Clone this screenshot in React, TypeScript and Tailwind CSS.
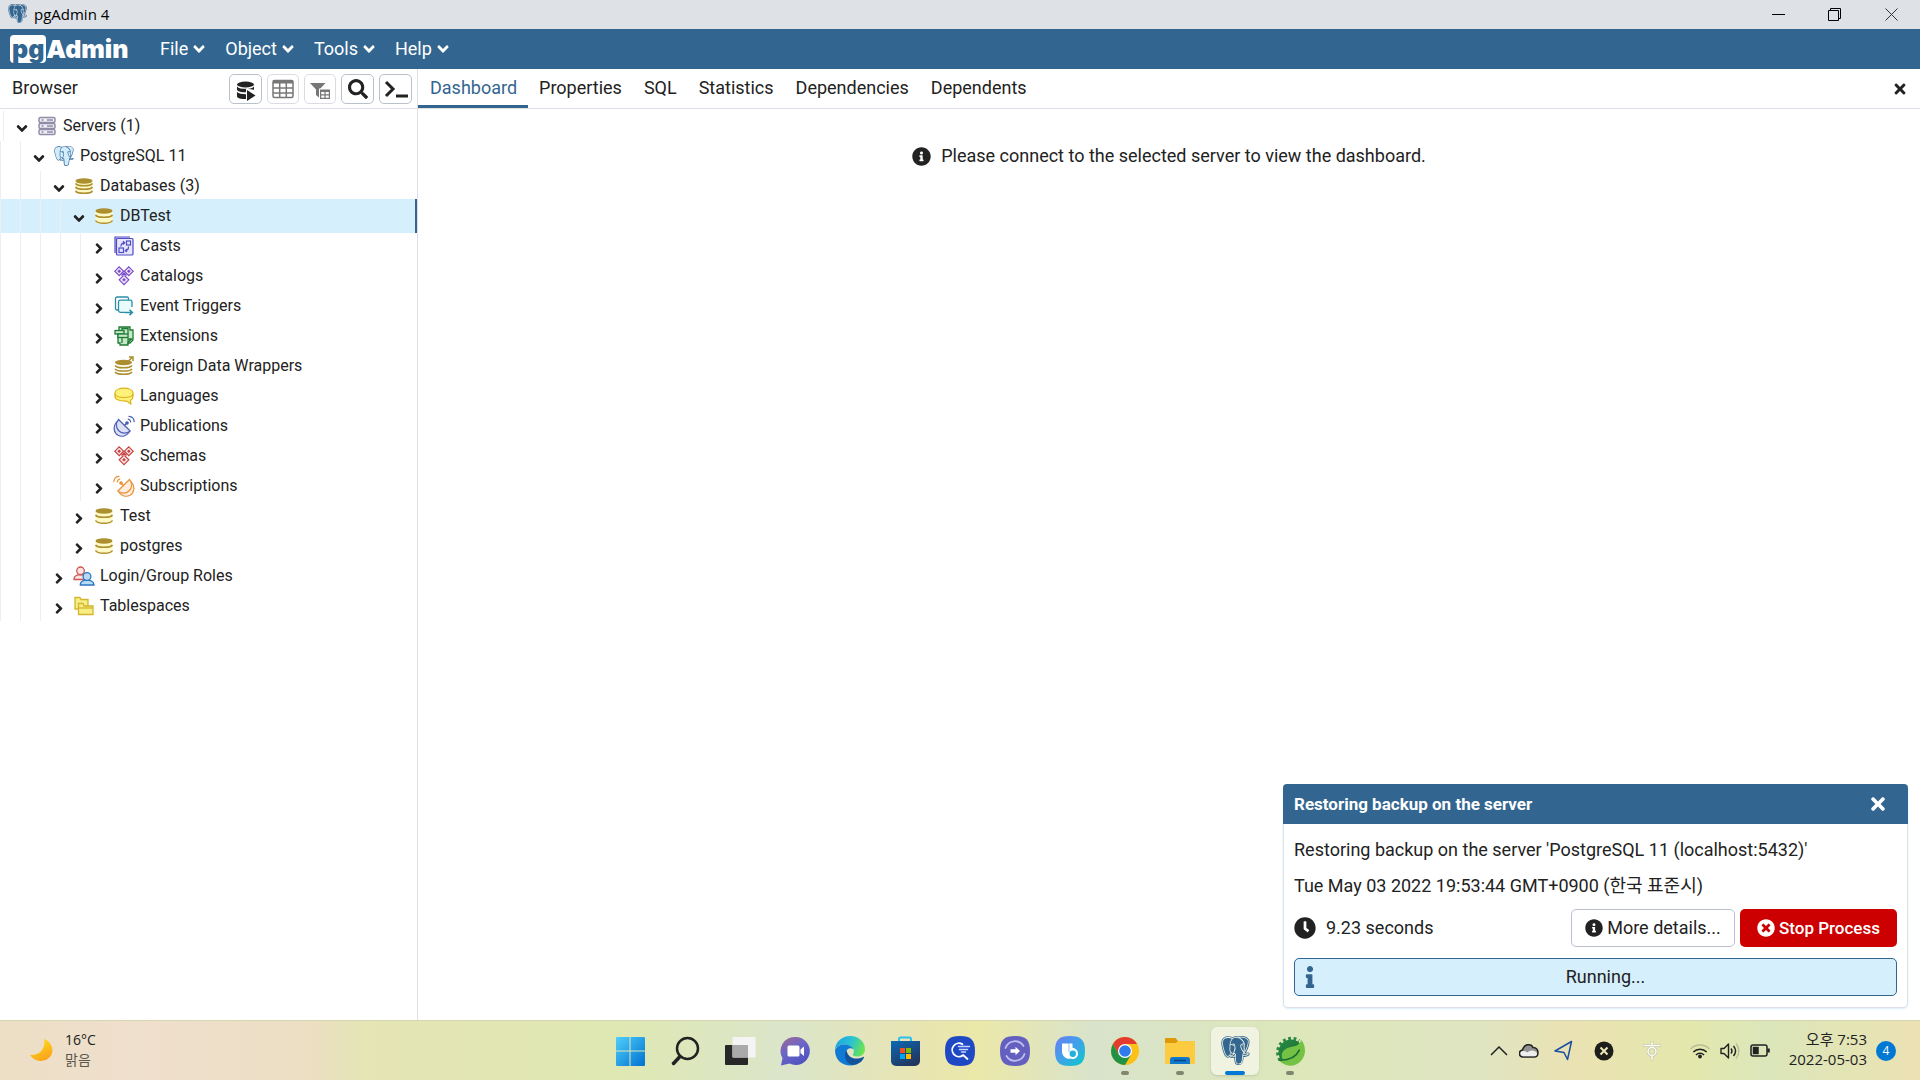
import React from "react";
import { BiLogoPostgresql } from "react-icons/bi";
import { FaAngleDown, FaAngleRight, FaClock, FaInfo, FaInfoCircle, FaSearch, FaTimes, FaTimesCircle } from "react-icons/fa";
import { SiPostgresql } from "react-icons/si";

const Database = ({ layers = 3 }: { layers?: number }) => (
  <svg width="20" height="20" viewBox="0 0 20 20">
    <path d="M1.500 5v10.500c0 1.700 3.800 2.500 8.500 2.500s8.500-.8 8.500-2.500V5z" fill="#fdf8c4" />
    <ellipse cx="10" cy="5" rx="8.500" ry="2.700" fill="#ac8f2f" />
    <g fill="none" stroke="#ac8f2f" strokeWidth="1.500">
      {layers === 3 ? (
        <path d="M1.500 9c1 1.700 4.500 2.300 8.500 2.300s7.500-.6 8.500-2.300M1.500 14.500c1 2 4.500 2.700 8.500 2.700s7.500-.7 8.500-2.700" />
      ) : (
        <path d="M1.500 7.500c1 1.600 4.500 2.200 8.500 2.200s7.500-.6 8.500-2.200M1.500 11c1 1.700 4.500 2.300 8.500 2.300s7.500-.6 8.500-2.300M1.500 15c1 1.700 4.500 2.300 8.500 2.300s7.500-.6 8.500-2.300" />
      )}
    </g>
  </svg>
);

const Servers = () => (
  <svg width="20" height="20" viewBox="0 0 20 20" fill="#f0eff5" stroke="#8f8ca8" strokeWidth="1.500">
    {[1.5, 7.5, 13.5].map((y) => (
      <g key={y}>
        <rect x="2" y={y} width="16" height="5" rx="1.500" />
        <path d={`M4.500 ${y + 2.5}h2M10 ${y + 2.5}h6`} strokeWidth="1.300" />
      </g>
    ))}
  </svg>
);

const Elephant = () => (
  <svg width="20" height="20" viewBox="0 0 24 24">
    <path d="M8 1.500C5 .2 1.500 1.300 1.300 5.500c0 3.500 2 10.500 4 11 1.200.2 2.200-1 3.700-3l3 2v4c.2 3.500 2.500 4.500 4.700 3.500 1.500-1 1.500-4 1.800-7 2 .3 4 .2 4.500-1.200l-3-.5c2-3 3.500-7.500 3-9.500C21.500 1.300 17.500.5 15 1.600 12.500.8 10.500.8 8 1.500z" fill="#d2ecfa" />
    <SiPostgresql size={24} color="#2f6a9a" />
  </svg>
);

const Casts = () => (
  <svg width="20" height="20" viewBox="0 0 20 20" fill="none" stroke="#4f4cc4" strokeWidth="1.200">
    <path d="M1 17V1h15" fill="#e2e0fa" />
    <rect x="2.500" y="2.500" width="16.500" height="16.500" rx="1" fill="#e7e6fc" />
    <rect x="5" y="12" width="4.500" height="4.500" />
    <rect x="12.500" y="5" width="4" height="4" />
    <path d="M6.800 10.500C7 8 8 6.800 10.500 6.800M9 5.200l1.700 1.600L9 8.500M14.500 10.500c0 3-1 4-3 4M13 13l-1.700 1.600L13 16" />
  </svg>
);

const Diamonds = ({ red = false }: { red?: boolean }) => (
  <svg width="20" height="20" viewBox="0 0 20 20" fill={red ? "#fbe9e9" : "#efe5fa"} stroke={red ? "#c8403f" : "#7a4cc8"} strokeWidth="1.200">
    <path d="M5.200 .8L9.600 5.200 5.200 9.600 .8 5.200zM14.800 .8l4.400 4.400-4.400 4.400-4.400-4.400zM10 9l4.800 4.800L10 18.600l-4.800-4.800z" />
    <path d="M5.200 3.700v3M3.700 5.200h3M14.800 3.700v3M13.300 5.200h3M10 12.300v3M8.500 13.800h3M7.500 9.500L10 7l2.500 2.500" strokeWidth="1.500" />
  </svg>
);

const EventTriggers = () => (
  <svg width="20" height="20" viewBox="0 0 20 20" fill="none" stroke="#2a8fa6" strokeWidth="1.300">
    <path d="M4.500 14H3a1.500 1.500 0 0 1-1.500-1.500v-10A1.500 1.500 0 0 1 3 1h10a1.500 1.500 0 0 1 1.500 1.500V4" />
    <path d="M18 11V6a1.800 1.800 0 0 0-1.800-1.800H6.300A1.800 1.800 0 0 0 4.500 6v8.500a1.800 1.800 0 0 0 1.800 1.800H11" fill="#e9fbfd" />
    <path d="M11 16.500h7M15.500 13.800l2.800 2.700-2.800 2.700" strokeWidth="1.600" />
  </svg>
);

const Extensions = () => (
  <svg width="20" height="20" viewBox="0 0 20 20" fill="#c5e8cb" stroke="#1f7a33" strokeWidth="1.300">
    <path d="M5 1h11v3h3v10l-3 3h-2v2H6v-2H4V8h1z" />
    <rect x="1" y="4.500" width="9" height="3.500" />
    <rect x="4" y="8" width="10" height="3.500" />
    <path d="M8 4V2.500h6V8M8 11.500v5.500M14 18v-5h4.500M14 16.500l3.500-3.500" fill="none" />
  </svg>
);

const Foreign = () => (
  <svg width="20" height="20" viewBox="0 0 20 20" fill="none" stroke="#ac8f2f" strokeWidth="1.500">
    <ellipse cx="9.500" cy="6.500" rx="8.500" ry="2.700" fill="#ac8f2f" stroke="none" />
    <path d="M1 9.500c1 1.600 4.500 2.200 8.500 2.200S17 11.100 18 9.500M1 12.800c1 1.600 4.500 2.200 8.500 2.200s7.500-.6 8.500-2.200M1 16c1 1.600 4.500 2.200 8.500 2.200s7.500-.6 8.500-2.200" />
    <path d="M14 5.500l4-4M15 1h4v4" />
  </svg>
);

const Languages = () => (
  <svg width="20" height="20" viewBox="0 0 20 20" fill="#fff27a" stroke="#d9b419" strokeWidth="1.200">
    <path d="M1 7c0-3 4-4.800 9-4.800S19 4 19 7v3.500c0 2-.8 3-2.500 3.800l.3 3.700-4-3C5.500 15.300 1 13.500 1 10.500z" />
    <path d="M1 8c.5 2.500 4.500 3.500 9 3.500s8.500-1 9-3.500" fill="none" />
  </svg>
);

const Dish = ({ orange = false }: { orange?: boolean }) => (
  <svg width="22" height="22" viewBox="0 0 22 22" stroke={orange ? "#e8913a" : "#4f5fb5"} fill={orange ? "#fdeedd" : "#dde1f5"} strokeWidth="1.200" strokeLinecap="round">
    <g transform={orange ? "translate(22 0) scale(-1 1)" : undefined}>
      <path d="M3.500 7C-.5 12 1 18 5 20.300c4 2 8.500.7 11-2.800z" />
      <path d="M5.500 4.500C2.500 8 2.800 13 6 16s8 2.700 11.200 0z" />
      <path d="M11.500 10.500L14 8" />
      <circle cx="14" cy="8" r="1.200" fill={orange ? "#e8913a" : "#4f5fb5"} />
      <path d="M15.200 4.200c1.400.2 2.300 1.200 2.500 2.600M16 1.300c3 .2 5 2.400 5.200 5.300" fill="none" />
    </g>
  </svg>
);

const Roles = () => (
  <svg width="22" height="20" viewBox="0 0 22 20" strokeWidth="1.300">
    <g fill="#fbe4e4" stroke="#d05555">
      <path d="M1 13.500c0-3 2-4.300 4.200-4.700h4.600c2 .4 3.700 1.700 4 4.700z" />
      <circle cx="7.500" cy="4.800" r="3.800" />
    </g>
    <g fill="#b5dcf5" stroke="#2f74c0">
      <path d="M7.300 19c0-3 2-4.300 4.200-4.700h5c2.200.4 4.200 1.700 4.500 4.700z" />
      <circle cx="14" cy="10.500" r="3.900" />
    </g>
  </svg>
);

const Folders = () => (
  <svg width="20" height="20" viewBox="0 0 20 20" fill="#f7ee84" stroke="#d3b52e" strokeWidth="1.300">
    <path d="M1 13V1.500h5l1 2h7V13z" />
    <path d="M4.500 18.500v-11H9l1 2.500h9v8.500z" />
    <path d="M4.500 12H19" />
  </svg>
);

type Node = { label: string; depth: number; open?: boolean; icon: React.ReactNode; selected?: boolean };

const nodes: Node[] = [
  { label: "Servers (1)", depth: 0, open: true, icon: <Servers /> },
  { label: "PostgreSQL 11", depth: 1, open: true, icon: <Elephant /> },
  { label: "Databases (3)", depth: 2, open: true, icon: <Database layers={4} /> },
  { label: "DBTest", depth: 3, open: true, icon: <Database />, selected: true },
  { label: "Casts", depth: 4, icon: <Casts /> },
  { label: "Catalogs", depth: 4, icon: <Diamonds /> },
  { label: "Event Triggers", depth: 4, icon: <EventTriggers /> },
  { label: "Extensions", depth: 4, icon: <Extensions /> },
  { label: "Foreign Data Wrappers", depth: 4, icon: <Foreign /> },
  { label: "Languages", depth: 4, icon: <Languages /> },
  { label: "Publications", depth: 4, icon: <Dish /> },
  { label: "Schemas", depth: 4, icon: <Diamonds red /> },
  { label: "Subscriptions", depth: 4, icon: <Dish orange /> },
  { label: "Test", depth: 3, icon: <Database /> },
  { label: "postgres", depth: 3, icon: <Database /> },
  { label: "Login/Group Roles", depth: 2, icon: <Roles /> },
  { label: "Tablespaces", depth: 2, icon: <Folders /> },
];

function TreeRow({ node }: { node: Node }) {
  return (
    <li
      role="treeitem"
      aria-level={node.depth + 1}
      aria-expanded={!!node.open}
      aria-selected={!!node.selected}
      className={node.selected ? "-my-0.5 border-r-2 border-[#326690] bg-[#d6effc] py-0.5" : node.depth === 0 ? "pl-[3px]" : ""}
    >
      <div className="flex h-[30px]">
        {Array.from({ length: node.depth }, (_, i) => (
          <span key={i} className="w-5 shrink-0 border-l border-[#ebeef3]" />
        ))}
        <div className="flex items-center border-l border-[#ebeef3] pl-[11px]">
          <button aria-label={`Toggle ${node.label}`} className="mt-1 flex w-3.5 justify-center text-[#222]">
            {node.open ? <FaAngleDown size={17} /> : <FaAngleRight size={17} />}
          </button>
          <span className="ml-2 flex w-5 shrink-0 justify-center *:shrink-0">{node.icon}</span>
          <span className="ml-1.5 whitespace-nowrap text-base text-[#222]">{node.label}</span>
        </div>
      </div>
    </li>
  );
}

const tools: { label: string; dim?: boolean; icon: React.ReactNode }[] = [
  {
    label: "Query Tool",
    icon: (
      <svg className="mt-1" width="20" height="20" viewBox="0 0 20 20" fill="#222">
        <ellipse cx="9.500" cy="3.500" rx="8.500" ry="3" />
        <path d="M1 5.500c1.500 2 5 2.300 8.500 2.300s7-.3 8.500-2.300v3.300l-8-1.300v3.800C6 11.300 1 10.500 1 8.500zM1 11c1.500 1.800 5 2.200 9 2.200V18c-5 0-9-.6-9-2.800z" />
        <path d="M11 9l8.500 5.500L11 20z" />
      </svg>
    ),
  },
  {
    label: "View Data",
    dim: true,
    icon: (
      <svg width="22" height="20" viewBox="0 0 22 20" fill="none" stroke="#777" strokeWidth="1.500">
        <rect x="1" y="1.500" width="20" height="17" rx="1.500" />
        <path d="M1 3h20" strokeWidth="3" />
        <path d="M1 9h20M1 14h20M7.700 3v15M14.300 3v15" />
      </svg>
    ),
  },
  {
    label: "Filtered Rows",
    dim: true,
    icon: (
      <svg className="mt-1" width="20" height="18" viewBox="0 0 20 18" fill="#777">
        <path d="M0 1h15.500L9.500 7.500V16L6 13V7.500z" />
        <path d="M9 6.500h11V17H9z" fill="#fff" />
        <path d="M10 7.500h10V17H10z" />
        <path d="M11.200 10h3.200v2.200h-3.200zM15.600 10h3.200v2.200h-3.200zM11.200 13.500h3.200v2.200h-3.200zM15.600 13.500h3.200v2.200h-3.200z" fill="#fff" />
      </svg>
    ),
  },
  { label: "Search Objects", icon: <FaSearch size={20} /> },
  {
    label: "PSQL Tool",
    icon: (
      <svg width="24" height="20" viewBox="0 0 24 20" fill="none" stroke="#222" strokeWidth="3">
        <path d="M2 3l7 7-7 7M12 17h12" />
      </svg>
    ),
  },
];

const menus = ["File", "Object", "Tools", "Help"];
const tabs = ["Dashboard", "Properties", "SQL", "Statistics", "Dependencies", "Dependents"];

const Squircle = ({ fill, children }: { fill: string; children: React.ReactNode }) => (
  <svg width="30" height="30" viewBox="0 0 30 30">
    <defs>
      <linearGradient id="bix" x1="0" y1="0" x2="1" y2="1">
        <stop offset="0" stopColor="#6c7cf5" />
        <stop offset=".5" stopColor="#3fa3e8" />
        <stop offset="1" stopColor="#0ac8c8" />
      </linearGradient>
    </defs>
    <path d="M15 0c11 0 15 4 15 15s-4 15-15 15S0 26 0 15 4 0 15 0z" fill={fill} />
    {children}
  </svg>
);

const apps: { label: string; state?: "running" | "active"; icon: React.ReactNode }[] = [
  {
    label: "Start",
    icon: (
      <svg width="30" height="30" viewBox="0 0 30 30">
        <defs>
          <linearGradient id="win" x1="0" y1="0" x2="1" y2="1">
            <stop offset="0" stopColor="#4fd0fb" />
            <stop offset="1" stopColor="#0070d0" />
          </linearGradient>
        </defs>
        <path d="M2 1h12.500v13.500H1V2a1 1 0 0 1 1-1zM15.500 1H29a1 1 0 0 1 1 1v12.500H15.500zM1 15.500h13.500V30H2a1 1 0 0 1-1-1zM15.500 15.500H30V29a1 1 0 0 1-1 1H15.500z" fill="url(#win)" />
      </svg>
    ),
  },
  {
    label: "Search",
    icon: (
      <svg width="30" height="30" viewBox="0 0 30 30" fill="none" stroke="#222" strokeLinecap="round">
        <circle cx="17.500" cy="12.500" r="10.500" strokeWidth="2.500" />
        <path d="M10 20.500L3.500 27.500" strokeWidth="3.500" />
      </svg>
    ),
  },
  {
    label: "Task View",
    icon: (
      <svg width="32" height="30" viewBox="0 0 32 30">
        <rect x="1" y="9" width="23" height="20" rx="1" fill="#272727" />
        <rect x="8.500" y="1" width="23" height="20.500" rx="1" fill="#f4f4f4" />
        <path d="M8.500 9H24v12.500H8.500z" fill="#a9aaa9" />
      </svg>
    ),
  },
  {
    label: "Chat",
    icon: (
      <svg width="30" height="30" viewBox="0 0 30 30">
        <defs>
          <linearGradient id="chat" x1="0" y1="0" x2=".6" y2="1">
            <stop offset="0" stopColor="#a0688f" />
            <stop offset=".5" stopColor="#6b66c8" />
            <stop offset="1" stopColor="#4f52c0" />
          </linearGradient>
        </defs>
        <path d="M15.500 1a14 14 0 1 1-6 26.500L1 29.500l1.500-7.500A14 14 0 0 1 15.500 1z" fill="url(#chat)" />
        <rect x="7.500" y="9.500" width="12" height="11" rx="1.500" fill="#fff" />
        <path d="M20.500 13.500L24 10.500v9.500l-3.500-3z" fill="#fff" />
      </svg>
    ),
  },
  {
    label: "Edge",
    icon: (
      <svg width="30" height="30" viewBox="0 0 30 30">
        <defs>
          <linearGradient id="edgeTop" x1="0" y1=".3" x2="1" y2=".6">
            <stop offset="0" stopColor="#1fa4e0" />
            <stop offset=".5" stopColor="#2bc3d2" />
            <stop offset="1" stopColor="#6ee648" />
          </linearGradient>
        </defs>
        <path d="M0 13C1 5.500 7 0 15 0c9 0 15 6 15 13 0 5-3.500 7.500-7.500 7.500-3 0-5-1-4.700-2.300 1-1.200 1.200-2.200 1-3.500C18.300 11 14 8.500 9.500 8.500 5.500 8.500 2 10.500 0 13z" fill="url(#edgeTop)" />
        <path d="M0 14C1.500 10.500 5.500 8.500 9.500 8.500c4 0 7.700 1.800 9 4.800-2.300-2-6.800-1.700-7.300 3C10.700 22.500 16 28.500 21 28.500 12 32 0 27 0 14z" fill="#0f7bd5" />
        <path d="M11.500 14.500C8 18 10.500 30 20 28.800c4-.8 7.500-3.800 9-7.300.2-.7-.3-.8-.9-.5C21 24 13.500 23 11.500 14.500z" fill="#12539c" />
      </svg>
    ),
  },
  {
    label: "Microsoft Store",
    icon: (
      <svg width="30" height="30" viewBox="0 0 30 30">
        <defs>
          <linearGradient id="store" x1="0" y1="0" x2=".6" y2="1">
            <stop offset="0" stopColor="#0a6ab5" />
            <stop offset="1" stopColor="#22365f" />
          </linearGradient>
        </defs>
        <path d="M9 6V3a1.500 1.500 0 0 1 1.500-1.500h9A1.500 1.500 0 0 1 21 3v3" fill="none" stroke="#2cc0ee" strokeWidth="2" />
        <path d="M1 5h29v20a5 5 0 0 1-5 5H6a5 5 0 0 1-5-5z" fill="url(#store)" />
        <path d="M10 12h5v5h-5z" fill="#f25022" />
        <path d="M16 12h5v5h-5z" fill="#7fba00" />
        <path d="M10 18h5v5h-5z" fill="#00a4ef" />
        <path d="M16 18h5v5h-5z" fill="#ffb900" />
      </svg>
    ),
  },
  {
    label: "Quick Search",
    icon: (
      <Squircle fill="#1f48c4">
        <g fill="none" stroke="#fff" strokeLinecap="round" strokeWidth="1.800">
          <path d="M17.500 8.300a6.700 6.700 0 1 0 .5 11M18 19l4.500 4" />
          <path d="M13.500 10.500h11M14.500 13.500h8M16.500 16h4" strokeWidth="1.500" stroke="#c8d6ff" />
        </g>
      </Squircle>
    ),
  },
  {
    label: "Data Transfer",
    icon: (
      <Squircle fill="#6460c0">
        <g fill="none" stroke="#c0bdf0" strokeWidth="1.800" strokeLinecap="round">
          <path d="M5.500 12a10 10 0 0 1 18-2M24.500 18a10 10 0 0 1-18 2" />
        </g>
        <path d="M10.500 13.300h5v-2.500l4.500 4.200-4.500 4.200v-2.500h-5z" fill="#fff" />
      </Squircle>
    ),
  },
  {
    label: "Assistant",
    icon: (
      <Squircle fill="url(#bix)">
        <path d="M7 7.500h5.500a2 2 0 0 1 2 2V23C10 22.500 7 19.500 7 15.500z" fill="#fff" />
        <path d="M14 7.500h3.500v4.200c3.300.4 5.500 3 5.500 5.800 0 3.300-2.500 5.500-5.500 5.500-4 0-5.500-3-5.500-6z" fill="#fff" />
        <path d="M14 8v8" stroke="#8fc4ee" strokeWidth="1" />
        <circle cx="17.800" cy="17.800" r="3.200" fill="#22b0dc" />
      </Squircle>
    ),
  },
  {
    label: "Chrome",
    state: "running",
    icon: (
      <svg width="28" height="28" viewBox="0 0 28 28">
        <circle cx="14" cy="14" r="14" fill="#fbc116" />
        <path d="M14 0a14 14 0 0 1 12.100 7H14L7.900 17.500 1.900 7A14 14 0 0 1 14 0z" fill="#e33b2e" />
        <path d="M1.900 7A14 14 0 0 0 14 28l6.100-10.500L14 20.500l-6.100-3z" fill="#1f9246" />
        <circle cx="14" cy="14" r="7" fill="#fff" />
        <circle cx="14" cy="14" r="5.800" fill="#2f7bec" />
      </svg>
    ),
  },
  {
    label: "File Explorer",
    state: "running",
    icon: (
      <svg width="30" height="30" viewBox="0 0 30 30">
        <path d="M0 3a1 1 0 0 1 1-1h9.500l2.500 3H29a1 1 0 0 1 1 1v4H0z" fill="#dd9a08" />
        <path d="M0 7h11l2-2h16a1 1 0 0 1 1 1v21a1 1 0 0 1-1 1H1a1 1 0 0 1-1-1z" fill="#fdcb40" />
        <path d="M7.500 21h15a2.500 2.500 0 0 1 2.500 2.500V28H5v-4.500A2.500 2.500 0 0 1 7.500 21z" fill="#0f78cc" />
        <path d="M9 24.500h12" stroke="#08447f" strokeWidth="1.500" />
      </svg>
    ),
  },
  { label: "pgAdmin 4", state: "active", icon: <BiLogoPostgresql size={35} color="#336791" /> },
  {
    label: "Spring Tools",
    state: "running",
    icon: (
      <svg width="30" height="30" viewBox="0 0 30 30">
        <defs>
          <linearGradient id="leaf" x1="0" y1="0" x2=".8" y2=".9">
            <stop offset="0" stopColor="#2a8a45" />
            <stop offset=".55" stopColor="#1f7a3a" />
            <stop offset=".8" stopColor="#6cbe45" />
          </linearGradient>
        </defs>
        <path d="M5.500 24A13.500 13.500 0 0 1 24 5" fill="none" stroke="#2a8a45" strokeWidth="4" strokeDasharray="2.700 2.500" />
        <circle cx="16" cy="16" r="12.500" fill="url(#leaf)" />
        <path d="M26.500 4C31 10 31.500 19 26 25c-5 5.500-13 6-18.500 2.300C5.500 26 4.500 25 4 24c8 .5 17-2 20.500-9z" fill="#74c244" />
        <path d="M26.500 3.500c-1.500 5.500-5.500 6.500-10.500 7.500-6 1.300-9.500 4.500-9.300 9 .1 1.800.8 3 1.500 3.700C20 22.500 27.500 18 26.500 3.500z" fill="#74c244" />
        <path d="M4.500 24.200c9 .3 16.500-3 19.800-10" fill="none" stroke="#176c31" strokeWidth="1.600" strokeLinecap="round" />
      </svg>
    ),
  },
];

export default function App() {
  return (
    <div className="relative flex h-screen flex-col overflow-hidden bg-white font-[Roboto,'Noto_Sans_CJK_KR',sans-serif] text-[#222]">
      <header className="flex h-[29px] shrink-0 items-center bg-[#dee1e6] pl-1.5 font-['Open_Sans','Noto_Sans_CJK_KR',sans-serif] text-black">
        <BiLogoPostgresql className="-mt-0.5" size={23} color="#336791" />
        <span className="ml-[5px] text-[15px]">pgAdmin 4</span>
        <div className="ml-auto flex h-full">
          <button aria-label="Minimize" className="flex w-14 items-center justify-center">
            <svg width="13" height="13" viewBox="0 0 13 13" stroke="#000"><path d="M0 6.500h13" /></svg>
          </button>
          <button aria-label="Restore" className="flex w-14 items-center justify-center">
            <svg width="13" height="13" viewBox="0 0 13 13" fill="none" stroke="#000"><path d="M.5 2.500h10v10H.5zM2.500 2V.5h10v10H11" /></svg>
          </button>
          <button aria-label="Close" className="flex w-[58px] items-center justify-center">
            <svg width="13" height="13" viewBox="0 0 13 13" stroke="#333"><path d="M.5.500l12 12M12.500.500l-12 12" /></svg>
          </button>
        </div>
      </header>

      <div className="flex h-10 shrink-0 items-center bg-[#326690] text-white">
        <div className="ml-2.5 flex w-[136px] items-center font-[Inter,sans-serif] text-[25px] leading-7 font-black">
          <span className="h-7 rounded-sm bg-white px-0.5 text-[#326690]">pg</span>
          <span>Admin</span>
        </div>
        <nav className="flex gap-[17px] pl-3.5">
          {menus.map((m) => (
            <button key={m} className="flex items-center gap-0.5 text-lg">
              {m}
              <FaAngleDown size={18} />
            </button>
          ))}
        </nav>
      </div>

      <div className="flex min-h-0 flex-1">
        <aside className="flex w-[418px] shrink-0 flex-col border-r border-[#dde0e6]">
          <div className="flex h-10 shrink-0 items-center border-b border-[#dde0e6] pr-[5px] pl-3">
            <h2 className="flex-1 pb-0.5 text-lg">Browser</h2>
            <div className="flex gap-[5px]">
              {tools.map((t) => (
                <button key={t.label} aria-label={t.label} className={t.dim ? "flex h-[30px] w-8 items-center justify-center rounded-[5px] border border-[#d9dce3]" : "flex h-[30px] w-[33px] items-center justify-center rounded-[5px] border border-[#bac1cd]"}>
                  {t.icon}
                </button>
              ))}
            </div>
          </div>
          <ul role="tree" aria-label="Browser" className="pt-0.5">
            {nodes.map((n) => <TreeRow key={n.label} node={n} />)}
          </ul>
        </aside>

        <main className="flex min-w-0 flex-1 flex-col">
          <div className="flex h-10 shrink-0 border-b border-[#dde0e6]">
            <div role="tablist" className="flex">
              {tabs.map((t, i) => (
                <button key={t} role="tab" aria-selected={i === 0} className={i === 0 ? "border-b-3 border-[#326690] px-3 pt-px pr-[11px] text-lg text-[#326690]" : "border-b-3 border-transparent px-[11px] pt-px text-lg"}>
                  {t}
                </button>
              ))}
            </div>
            <button aria-label="Close tab" className="mr-3 ml-auto"><FaTimes size={16} /></button>
          </div>
          <p className="mt-[33px] flex items-center justify-center gap-2.5 text-lg">
            <FaInfoCircle size={19} />
            Please connect to the selected server to view the dashboard.
          </p>
        </main>
      </div>

      <section aria-label="Background process" className="absolute right-3 bottom-[72px] w-[625px] rounded-[5px] border border-t-0 border-[#dde0e6] bg-white text-lg shadow-[0_1px_2px_#d6effc]">
        <div className="-mx-px flex h-10 items-center rounded-t-[4px] bg-[#326690] pr-5 pl-[11px] text-[17px] font-bold text-white">
          Restoring backup on the server
          <button aria-label="Close" className="ml-auto"><FaTimes size={20} /></button>
        </div>
        <div className="px-2.5 pt-2 pb-[11px] leading-9">
          <p>Restoring backup on the server 'PostgreSQL 11 (localhost:5432)'</p>
          <p>Tue May 03 2022 19:53:44 GMT+0900 (한국 표준시)</p>
          <div className="mt-[5px] flex items-center">
            <FaClock size={22} />
            <span className="ml-2.5">9.23 seconds</span>
            <button className="ml-auto flex h-[38px] w-[164px] items-center justify-center gap-1 rounded-[5px] border border-[#bac1cd]">
              <FaInfoCircle size={18} />More details...
            </button>
            <button className="ml-[5px] flex h-[38px] w-[157px] items-center justify-center gap-1 rounded-[5px] bg-[#cc0000] text-[17px] font-medium text-white">
              <FaTimesCircle size={18} />Stop Process
            </button>
          </div>
          <div role="status" className="mt-[11px] flex h-[38px] items-center rounded-[5px] border border-[#326690] bg-[#d6effc] pl-1">
            <FaInfo size={22} color="#326690" />
            <span className="flex-1 pr-[6px] text-center">Running...</span>
          </div>
        </div>
      </section>

      <footer className="grid h-15 shrink-0 grid-cols-[1fr_auto_1fr] items-stretch border-t border-[#d5d6b0] bg-[linear-gradient(90deg,#ecdfc5_0%,#efdfcd_7%,#ecdfc4_16%,#e5e5b5_19%,#dfe8b2_32%,#dbe5ca_41%,#e8e5b2_48%,#ebe8a9_51%,#d9e3cb_57%,#dde7ba_68%,#dfe5c2_77%,#ebe2b3_82%,#e3e8ac_88%,#dbe6ba_92%,#e5e4b4_97%,#ebe0b5_100%)] font-['Open_Sans','Noto_Sans_CJK_KR',sans-serif] text-[#222]">
        <div className="flex items-center pl-[30px]">
          <svg width="23" height="25" viewBox="0 0 23 25">
            <defs>
              <linearGradient id="moon" x1="0" y1="0" x2=".5" y2="1">
                <stop offset="0" stopColor="#ffe620" />
                <stop offset="1" stopColor="#fba51a" />
              </linearGradient>
            </defs>
            <path d="M14 1c6 2 9.500 8 8 14-2 8-15 12-22 2 9 1 16-6 14-16z" fill="url(#moon)" />
          </svg>
          <div className="ml-3 pb-0.5 text-sm leading-5">
            <div>16°C</div>
            <div className="text-[#5c584e]">맑음</div>
          </div>
        </div>

        <nav aria-label="Taskbar" className="flex items-center gap-[7px]">
          {apps.map((a) => (
            <button key={a.label} aria-label={a.label} className={a.state === "active" ? "relative flex size-12 items-center justify-center rounded-md bg-[#f0f3e0] shadow-sm" : "relative flex size-12 items-center justify-center"}>
              {a.icon}
              {a.state && <span className={a.state === "active" ? "absolute bottom-0 h-1 w-5 rounded-full bg-[#0078d4]" : "absolute bottom-0 h-1 w-2 rounded-full bg-[#82866f]"} />}
            </button>
          ))}
        </nav>

        <div className="flex items-center justify-end pr-6">
          <button aria-label="Show hidden icons"><svg width="18" height="10" viewBox="0 0 18 10" fill="none" stroke="#222" strokeWidth="1.500"><path d="M1 9l8-8 8 8" /></svg></button>
          <svg className="ml-[11px]" width="20" height="15" viewBox="0 0 20 15">
            <path d="M4 14a3.500 3.500 0 0 1-.5-7C5 1 12 0 14 4.500c3 .2 5 2 5 5 0 3-2 4.500-4 4.500z" fill="#929292" stroke="#222" strokeWidth="1.500" />
            <path d="M4 13.300c-3.500-.8-3-5 0-5.300 2-.2 3 .5 4.500 1.500C10 8 13 6.500 16.500 8.500c3 2.200 1 4.800-1.500 4.800z" fill="#eee" />
          </svg>
          <svg className="ml-[15px]" width="19" height="21" viewBox="0 0 19 21" fill="none" stroke="#1c4fa0" strokeWidth="1.500" strokeLinejoin="round"><path d="M17.500 1.500L1 11l9 1.500 3.500 7z" /></svg>
          <svg className="ml-[21px]" width="20" height="20" viewBox="0 0 20 20"><circle cx="10" cy="10" r="9.500" fill="#1d1d1b" /><path d="M6.500 6.500l7 7M13.500 6.500l-7 7" stroke="#eee8b8" strokeWidth="2" /></svg>
          <svg className="ml-[29px]" width="18" height="20" viewBox="0 0 18 20" fill="none" stroke="#c3c5aa" strokeWidth="2.800"><path d="M9 0v3.500M0 4.500h18M9 14.500v5" /><circle cx="9" cy="10.500" r="4" /><path d="M9 .5v3M.5 4.500h17M9 15v4" stroke="#fdfdf5" strokeWidth="1.500" /><circle cx="9" cy="10.500" r="4" stroke="#fdfdf5" strokeWidth="1.500" /></svg>
          <svg className="ml-[29px]" width="20" height="16" viewBox="0 0 20 16" fill="none" strokeWidth="1.500">
            <path d="M.5 6a13.500 13.500 0 0 1 19 0" stroke="#b9bd98" />
            <path d="M3.300 9a9.500 9.500 0 0 1 13.400 0M6 12a5.500 5.500 0 0 1 8 0" stroke="#222" />
            <circle cx="10" cy="13.500" r="1.900" fill="#222" />
          </svg>
          <svg className="ml-2.5" width="20" height="18" viewBox="0 0 20 18" fill="none" stroke="#222" strokeWidth="1.400" strokeLinejoin="round">
            <path d="M1 6.500h3L8.500 2v14L4 11.500H1zM11 6.500c1.200 1.500 1.200 3.500 0 5M13.500 4c2.500 3 2.500 7 0 10" />
            <path d="M16 1.500c3.800 4.500 3.800 10.500 0 15" stroke="#b9bd98" />
          </svg>
          <svg className="ml-2.5" width="20" height="13" viewBox="0 0 20 13" fill="none" stroke="#222" strokeWidth="1.500"><rect x="1" y="1" width="16" height="11" rx="2" /><path d="M3.500 3.500H8v6H3.500z" fill="#222" /><path d="M18.500 4.500v4" strokeWidth="2.500" /></svg>
          <div className="ml-[19px] pb-1 text-right text-[15px] leading-5 whitespace-nowrap">
            <div>오후 7:53</div>
            <div>2022-05-03</div>
          </div>
          <span className="ml-[9px] flex size-5 items-center justify-center rounded-full bg-[#0078d4] text-xs text-white">4</span>
        </div>
      </footer>
    </div>
  );
}
